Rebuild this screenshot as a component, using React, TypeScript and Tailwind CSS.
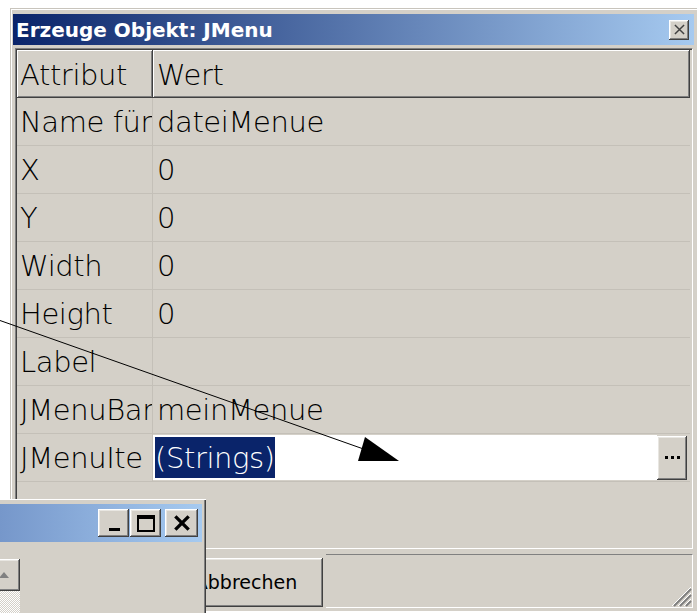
import React from "react";

const rows: [string, string][] = [
  ["Name für", "dateiMenue"],
  ["X", "0"],
  ["Y", "0"],
  ["Width", "0"],
  ["Height", "0"],
  ["Label", ""],
  ["JMenuBar", "meinMenue"],
];

// classic 3d raised edge used by buttons
const raised =
  "bg-[#d4d0c8] shadow-[inset_-1px_-1px_#404040,inset_1px_1px_#ffffff,inset_-2px_-2px_#808080,inset_2px_2px_#e8e6e1]";

const CloseGlyph = ({ size = 12, stroke = 2, color = "#000" }) => (
  <svg width={size} height={size} viewBox="0 0 12 12">
    <path d="M1 1 L11 11 M11 1 L1 11" stroke={color} strokeWidth={stroke} />
  </svg>
);

const App = () => (
  <div className="relative w-[697px] h-[613px] overflow-hidden bg-white font-['DejaVu_Sans',sans-serif] text-black">
    {/* dialog window */}
    <div className="absolute left-[10px] top-[8px] w-[687px] h-[603px] flex flex-col bg-[#d4d0c8] pt-[6px] px-[3px] shadow-[inset_1px_1px_#c8c4bc,inset_2px_2px_#ffffff]">
      <div className="h-[31px] shrink-0 flex items-center justify-between pl-[3px] pr-[5px] bg-[linear-gradient(to_right,#0a246a,#a6caf0)]">
        <span className="text-white font-bold text-[20px] leading-none">Erzeuge Objekt: JMenu</span>
        <div className={`w-[20px] h-[20px] flex items-center justify-center ${raised}`}>
          <CloseGlyph size={11} stroke={1.6} color="#404040" />
        </div>
      </div>

      {/* property table */}
      <div className="mt-[3px] ml-[2px] mr-[1px] h-[501px] shrink-0 border border-t-[#808080] border-l-[#808080] border-r-white border-b-white shadow-[inset_1px_1px_#404040]">
        <div className="pl-[1px] pt-[1px] w-[674px] font-extralight text-[29px] tracking-[-0.4px]">
          <div className="flex h-[48px] leading-[50px]">
            <div className="w-[136px] pl-[3px] shadow-[inset_-1px_-1px_#404040,inset_1px_1px_#ffffff,inset_-2px_-2px_#808080]">
              Attribut
            </div>
            <div className="flex-1 pl-[4px] shadow-[inset_-1px_-1px_#404040,inset_1px_1px_#ffffff,inset_-2px_-2px_#808080]">
              Wert
            </div>
          </div>
          {rows.map(([name, value]) => (
            <div key={name} className="flex h-[48px] border-b border-[#c4c0b8] leading-[49px]">
              <div className="w-[136px] pl-[3px] overflow-hidden whitespace-nowrap border-r border-[#c4c0b8]">
                {name}
              </div>
              <div className="flex-1 pl-[4px] overflow-hidden whitespace-nowrap">{value}</div>
            </div>
          ))}
          <div className="flex h-[48px] border-b border-[#c4c0b8]">
            <div className="w-[136px] pl-[3px] leading-[49px] overflow-hidden whitespace-nowrap border-r border-[#c4c0b8]">
              JMenuIte
            </div>
            <div className="flex-1 flex items-stretch py-[1px] pr-[3px]">
              <div className="flex-1 bg-white flex items-center pl-[2px]">
                <span className="bg-[#0a246a] text-white leading-[39px] pt-[2px]">(Strings)</span>
              </div>
              <div className={`w-[30px] mt-[1px] flex items-center justify-center gap-[3px] pb-[2px] ${raised}`}>
                <span className="w-[3px] h-[3px] bg-black" />
                <span className="w-[3px] h-[3px] bg-black" />
                <span className="w-[3px] h-[3px] bg-black" />
              </div>
            </div>
          </div>
        </div>
      </div>

      {/* button row */}
      <div className="flex h-[61px] pb-[2px] text-[19px]">
        <div className={`ml-[8px] mt-[9px] w-[140px] h-[49px] flex items-center justify-center ${raised}`}>OK</div>
        <div className={`ml-[8px] mt-[9px] w-[154px] h-[49px] flex items-center justify-center ${raised}`}>
          Abbrechen
        </div>
        <div className="relative flex-1 ml-[3px] mt-[5px] mr-[1px] border-t border-t-[#808080] border-r border-r-white border-b border-b-white">
          <svg className="absolute right-0 bottom-0" width="22" height="22" viewBox="0 0 22 22">
            <path d="M21 4 L4 21 M21 10 L10 21 M21 16 L16 21" stroke="#808080" strokeWidth="2" />
            <path d="M21 2 L2 21 M21 8 L8 21 M21 14 L14 21" stroke="#ffffff" strokeWidth="1" />
          </svg>
        </div>
      </div>
    </div>

    {/* second window, mostly off the left edge */}
    <div className="absolute left-[-12px] top-[499px] w-[218px] h-[120px] bg-[#d4d0c8] pt-[4px] border-t border-t-white shadow-[inset_-1px_0_#404040,inset_-2px_0_#808080]">
      <div className="h-[38px] mr-[4px] flex items-center justify-end pr-[4px] bg-[linear-gradient(to_right,#7394c8,#a6caf0)]">
        <div className={`w-[31px] h-[28px] flex items-end justify-center pb-[6px] pl-[2px] ${raised}`}>
          <span className="w-[11px] h-[3px] bg-black" />
        </div>
        <div className={`ml-[1px] w-[31px] h-[28px] flex items-center justify-center ${raised}`}>
          <span className="w-[18px] h-[17px] border-2 border-t-[4px] border-black" />
        </div>
        <div className={`ml-[4px] w-[33px] h-[28px] flex items-center justify-center ${raised}`}>
          <CloseGlyph size={16} stroke={2.5} />
        </div>
      </div>
      <div className="pt-[17px] w-[32px]">
        <div className={`h-[32px] flex items-center justify-center ${raised}`}>
          <svg width="12" height="8" viewBox="0 0 12 8">
            <path d="M1 7 L6 1 L11 7 Z" fill="#808080" />
          </svg>
        </div>
        <div className="h-[40px] bg-[repeating-conic-gradient(#ffffff_0%_25%,#d4d0c8_0%_50%)] bg-size-[2px_2px]" />
      </div>
    </div>

    {/* annotation arrow */}
    <svg className="absolute inset-0 pointer-events-none" width="697" height="613" viewBox="0 0 697 613">
      <line x1="0" y1="320.5" x2="372" y2="452" stroke="#000" strokeWidth="1" />
      <polygon points="365,437 358,461 399,461" fill="#000" />
    </svg>
  </div>
);

export default App;
